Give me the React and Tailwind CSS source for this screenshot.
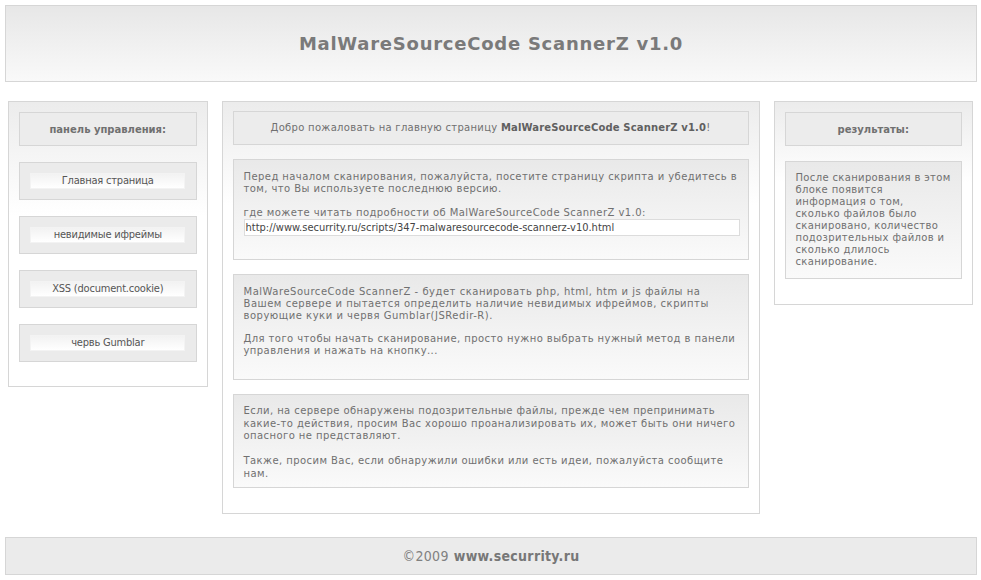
export default function App() {
  const verdana = { fontFamily: '"DejaVu Sans", Verdana, sans-serif' };
  const tahoma = { fontFamily: '"DejaVu Sans Condensed", "DejaVu Sans", Tahoma, sans-serif' };

  const menu = ["Главная страница", "невидимые ифреймы", "XSS (document.cookie)", "червь Gumblar"];

  return (
    <div className="w-[981px] min-h-[580px] bg-white text-[#707070] pt-[5px]" style={verdana}>
      {/* шапка */}
      <div className="mx-[5px] mr-[4px] h-[77px] border border-[#d6d6d6] bg-gradient-to-b from-[#e7e7e7] to-[#f9f9f9] flex items-center justify-center">
        <h1 className="text-[18px] font-bold text-[#7a7a7a] tracking-[0.75px]">MalWareSourceCode ScannerZ v1.0</h1>
      </div>

      <div className="flex items-start gap-[14px] px-[8px] mt-[19px]">
        {/* левая колонка */}
        <div className="w-[200px] border border-[#d6d6d6] bg-gradient-to-b from-[#ececec] to-white to-[40%] px-[10px] pt-[10px] pb-[24px] flex flex-col gap-[16px]">
          <div className="h-[34px] border border-[#d6d6d6] bg-[#ececec] flex items-center justify-center text-[10px] font-bold text-[#707070]">
            панель управления:
          </div>
          {menu.map((m) => (
            <div key={m} className="h-[38px] border border-[#d6d6d6] bg-[#ebebeb] flex items-center justify-center">
              <div className="w-[155px] h-[16px] bg-gradient-to-b from-[#f2f2f2] to-white border border-[#f3f3f3] flex items-center justify-center text-[11px] tracking-[-0.2px] text-[#555]" style={tahoma}>
                {m}
              </div>
            </div>
          ))}
        </div>

        {/* центр */}
        <div className="w-[538px] border border-[#d6d6d6] bg-gradient-to-b from-[#ececec] to-white to-[25%] px-[10px] pt-[9px] pb-[25px] flex flex-col gap-[14px] text-[10px] leading-[12px] tracking-[0.43px]">
          <div className="h-[34px] border border-[#d6d6d6] bg-[#ececec] flex items-center justify-center tracking-[0.3px]">
            Добро пожаловать на главную страницу&nbsp;<b className="text-[#606060] tracking-[0.15px]">MalWareSourceCode ScannerZ v1.0</b>!
          </div>

          <div className="h-[101px] border border-[#d6d6d6] bg-gradient-to-b from-[#e9e9e9] to-[#fafafa] px-[10px] pt-[11px]">
            <p>Перед началом сканирования, пожалуйста, посетите страницу скрипта и убедитесь в том, что Вы используете последнюю версию.</p>
            <p className="mt-[12px]">где можете читать подробности об MalWareSourceCode ScannerZ v1.0:</p>
            <div className="w-[496px] h-[17px] bg-white border border-[#dcdcdc] flex items-center px-[1px] text-[11px] tracking-normal text-[#444]" style={tahoma}>
              http://www.securrity.ru/scripts/347-malwaresourcecode-scannerz-v10.html
            </div>
          </div>

          <div className="h-[106px] border border-[#d6d6d6] bg-gradient-to-b from-[#e9e9e9] to-[#fafafa] px-[10px] pt-[11px]">
            <p className="tracking-[0.52px]">MalWareSourceCode ScannerZ - будет сканировать php, html, htm и js файлы на Вашем сервере и пытается определить наличие невидимых ифреймов, скрипты ворующие куки и червя Gumblar(JSRedir-R).</p>
            <p className="mt-[11px]">Для того чтобы начать сканирование, просто нужно выбрать нужный метод в панели управления и нажать на кнопку...</p>
          </div>

          <div className="h-[94px] border border-[#d6d6d6] bg-gradient-to-b from-[#e9e9e9] to-[#fafafa] px-[10px] pt-[10px] leading-[12.5px]">
            <p>Если, на сервере обнаружены подозрительные файлы, прежде чем препринимать какие-то действия, просим Вас хорошо проанализировать их, может быть они ничего опасного не представляют.</p>
            <p className="mt-[12.5px]">Также, просим Вас, если обнаружили ошибки или есть идеи, пожалуйста сообщите нам.</p>
          </div>
        </div>

        {/* правая колонка */}
        <div className="w-[200px] border border-[#d6d6d6] bg-gradient-to-b from-[#ececec] to-white to-[40%] px-[10px] pt-[10px] pb-[25px] flex flex-col gap-[15px]">
          <div className="h-[34px] border border-[#d6d6d6] bg-[#ececec] flex items-center justify-center text-[10px] font-bold text-[#707070]">
            результаты:
          </div>
          <div className="h-[118px] border border-[#d6d6d6] bg-gradient-to-b from-[#e9e9e9] to-[#fafafa] pl-[10px] pr-[6px] pt-[10px] text-[10px] leading-[12px] tracking-[0.35px]">
            После сканирования в этом<br />блоке появится<br />информация о том,<br />сколько файлов было<br />сканировано, количество<br />подозрительных файлов и<br />сколько длилось<br />сканирование.
          </div>
        </div>
      </div>

      {/* подвал */}
      <div className="mx-[5px] mr-[4px] mt-[23px] h-[38px] border border-[#d6d6d6] bg-[#ebebeb] flex items-center justify-center text-[14px] tracking-[0.3px] text-[#808080]" style={tahoma}>
        ©2009 <span className="ml-[5px] font-bold text-[#777]">www.securrity.ru</span>
      </div>
    </div>
  );
}
